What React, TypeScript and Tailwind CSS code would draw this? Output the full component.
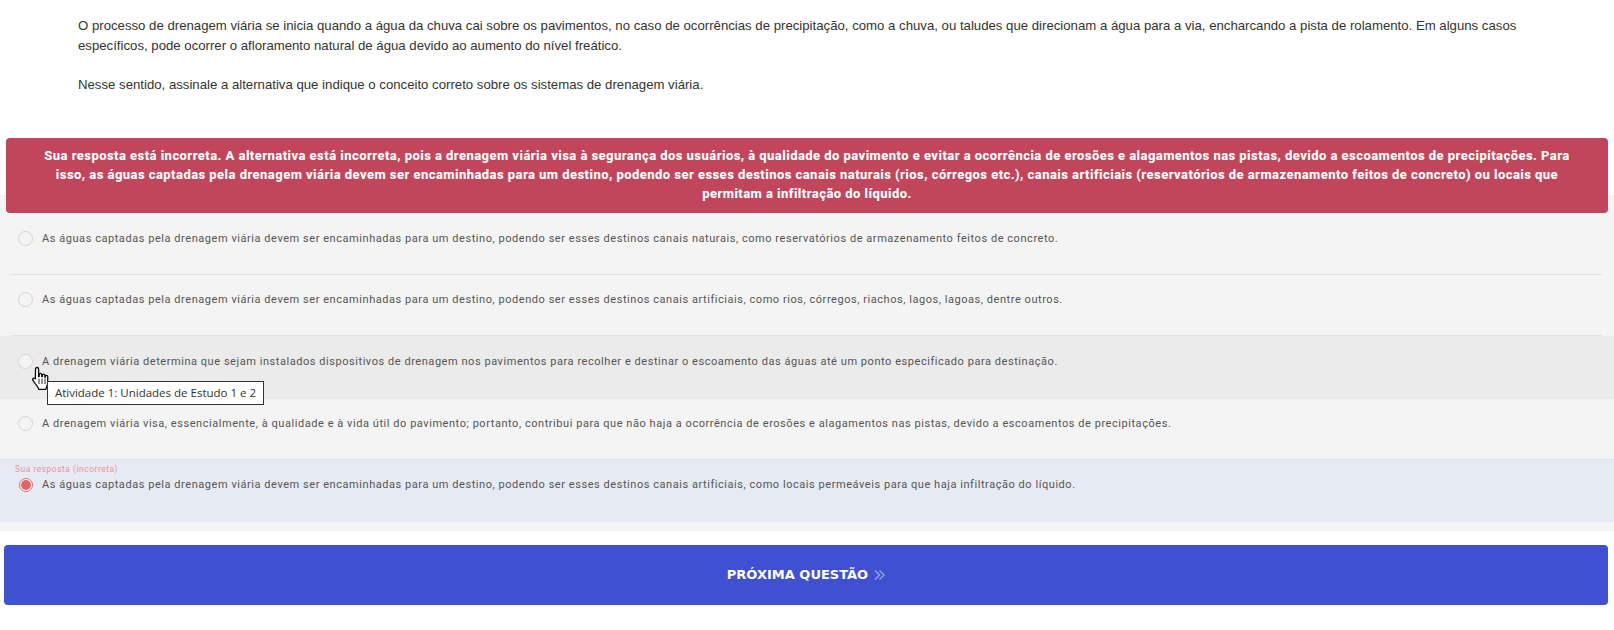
import React from "react";

const options = [
  { text: "As águas captadas pela drenagem viária devem ser encaminhadas para um destino, podendo ser esses destinos canais naturais, como reservatórios de armazenamento feitos de concreto." },
  { text: "As águas captadas pela drenagem viária devem ser encaminhadas para um destino, podendo ser esses destinos canais artificiais, como rios, córregos, riachos, lagos, lagoas, dentre outros." },
  { text: "A drenagem viária determina que sejam instalados dispositivos de drenagem nos pavimentos para recolher e destinar o escoamento das águas até um ponto especificado para destinação.", hover: true },
  { text: "A drenagem viária visa, essencialmente, à qualidade e à vida útil do pavimento; portanto, contribui para que não haja a ocorrência de erosões e alagamentos nas pistas, devido a escoamentos de precipitações." },
];

function Radio({ checked }: { checked?: boolean }) {
  if (checked) {
    return (
      <span className="mt-[1px] flex h-[14px] w-[14px] shrink-0 items-center justify-center rounded-full border border-[#e06666] bg-white">
        <span className="h-[10px] w-[10px] rounded-full bg-[#e06666]" />
      </span>
    );
  }
  return <span className="h-[15px] w-[15px] shrink-0 rounded-full border border-[#d5d5d5] bg-[#f4f4f4]" />;
}

function HandCursor() {
  return (
    <svg width="20" height="25" viewBox="0 0 20 25" className="absolute left-[31px] top-[30px] z-20">
      <path
        d="M6 1.500c1 0 1.600.7 1.600 1.700v7.300l.6-.1V8.600c0-1.700 2.400-1.700 2.500 0v1.900l.6.1V9.400c0-1.600 2.400-1.600 2.500 0v1.600l.5.1v-.7c0-1.500 2.400-1.500 2.400.2v6c0 3-1.400 4.200-1.900 6.700H7.800c-.6-2.200-2.400-4-4.900-7.500-.9-1.300-1.900-2.500-1-3.400 1-.9 2.400.2 2.500 1l.1-10.400C4.500 2.200 5 1.500 6 1.500z"
        fill="#fff"
        stroke="#111"
        strokeWidth="1.300"
      />
      <path d="M8 12.500v5.500M11 12.500v5.500M14 12.500v5.500" stroke="#111" strokeWidth="0.900" />
    </svg>
  );
}

export default function App() {
  return (
    <div className="min-h-[630px] bg-white font-['Liberation_Sans',sans-serif]">
      <div className="h-[138px] pl-[78px] pt-[16px] text-[13.2px] leading-[20px] text-[#333]">
        <p className="w-[1470px]">
          O processo de drenagem viária se inicia quando a água da chuva cai sobre os pavimentos, no caso de ocorrências de precipitação, como a chuva, ou taludes que direcionam a água para a via, encharcando a pista de rolamento. Em alguns casos específicos, pode ocorrer o afloramento natural de água devido ao aumento do nível freático.
        </p>
        <p className="mt-[19px]">Nesse sentido, assinale a alternativa que indique o conceito correto sobre os sistemas de drenagem viária.</p>
      </div>

      <div className="relative z-10 mx-[6px] mb-[-18px] flex h-[75px] items-center justify-center rounded-[4px] bg-[#c2465b] px-[36px] pb-[2px] text-center font-['Roboto',sans-serif] text-[13px] font-extrabold leading-[19px] tracking-[0.45px] text-white">
        <p>
          Sua resposta está incorreta. A alternativa está incorreta, pois a drenagem viária visa à segurança dos usuários, à qualidade do pavimento e evitar a ocorrência de erosões e alagamentos nas pistas, devido a escoamentos de precipitações. Para isso, as águas captadas pela drenagem viária devem ser encaminhadas para um destino, podendo ser esses destinos canais naturais (rios, córregos etc.), canais artificiais (reservatórios de armazenamento feitos de concreto) ou locais que permitam a infiltração do líquido.
        </p>
      </div>

      <div className="bg-[#f4f4f4] pb-[9px] pt-[19px] font-['Roboto',sans-serif] text-[11px] tracking-[0.55px] text-[#555]">
        {options.map((o, i) => (
          <div
            key={i}
            className={
              "relative flex items-start gap-[9px] pl-[18px] " +
              (i === 2 ? "h-[63px] bg-[#ebebeb] pt-[18px]" : i === 3 ? "h-[60px] pt-[17px]" : "h-[61px] pt-[17px]")
            }
          >
            <Radio />
            <span className="leading-[16px]">{o.text}</span>
            {i < 2 && <span className="absolute bottom-0 left-[11px] right-[12px] h-px bg-[#e2e2e2]" />}
            {o.hover && (
              <>
                <HandCursor />
                <span className="absolute left-[47px] top-[45px] z-20 flex h-[24px] w-[217px] items-center justify-center border border-[#333] bg-white font-['Open_Sans',sans-serif] text-[11.5px] tracking-normal text-[#333]">
                  Atividade 1: Unidades de Estudo 1 e 2
                </span>
              </>
            )}
          </div>
        ))}
        <div className="relative h-[63px] border-t border-[#dfe1e4] bg-[#e6ebf3] pl-[15px] pt-[4px]">
          <div className="text-[8.400px] leading-[11px] text-[#ea949d]">Sua resposta (incorreta)</div>
          <div className="ml-[4px] mt-[2px] flex items-start gap-[9px]">
            <Radio checked />
            <span className="leading-[16px]">As águas captadas pela drenagem viária devem ser encaminhadas para um destino, podendo ser esses destinos canais artificiais, como locais permeáveis para que haja infiltração do líquido.</span>
          </div>
        </div>
      </div>

      <button className="mx-[4px] mt-[14px] flex h-[60px] w-[1604px] items-center justify-center gap-[6px] rounded-[4px] bg-[#3f51d1] font-['DejaVu_Sans',sans-serif] text-[13px] font-bold text-white">
        PRÓXIMA QUESTÃO
        <svg width="11" height="12" viewBox="0 0 11 12" fill="none" stroke="#9aa5ea" strokeWidth="1.300">
          <path d="M1 1.500 5.500 6 1 10.500M5.500 1.500 10 6l-4.500 4.500" />
        </svg>
      </button>
    </div>
  );
}
